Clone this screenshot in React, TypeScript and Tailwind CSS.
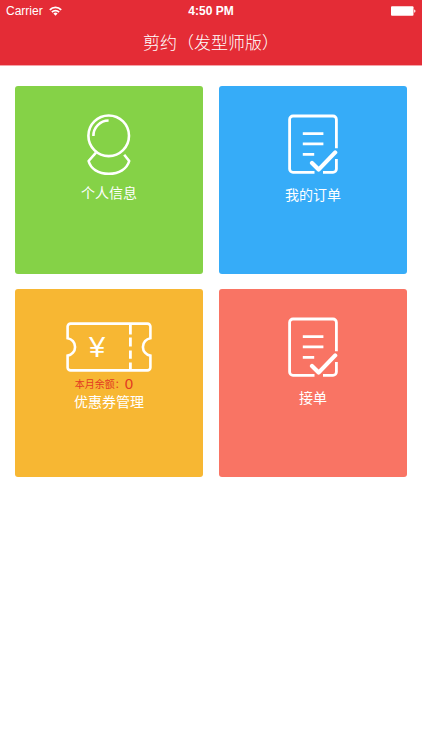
import type { ReactNode } from 'react';

function WifiIcon() {
  return (
    <svg width="13" height="10" viewBox="0 0 13 10" fill="none" stroke="white" strokeWidth="1.8" aria-hidden="true">
      <path d="M0.8 3.8a8 8 0 0 1 11.4 0" />
      <path d="M2.9 6.1a5 5 0 0 1 7.2 0" />
      <path d="M6.5 9.8L4.4 7.6a2.9 2.9 0 0 1 4.2 0z" fill="white" stroke="none" />
    </svg>
  );
}

function BatteryIcon() {
  return (
    <svg width="26" height="10" viewBox="0 0 26 10" fill="white" aria-hidden="true">
      <rect x="1" y="0.3" width="22.5" height="9.4" rx="1" />
      <path d="M24.2 3.4c1.6 0.2 1.6 3 0 3.2z" />
    </svg>
  );
}

function PersonIcon() {
  return (
    <svg width="44" height="62" viewBox="0 0 44 62" fill="none" stroke="white" strokeWidth="2.6" aria-hidden="true">
      <circle cx="21.7" cy="21.8" r="20.3" />
      <path d="M6.4 22A15.3 15.3 0 0 1 21.6 6.5" />
      <path d="M9 38.6L1.6 47C3.6 54.8 11.4 59.8 21.8 59.8S40 54.8 42.2 47L37.2 40.8" strokeLinejoin="round" />
    </svg>
  );
}

function OrderIcon() {
  return (
    <svg width="50" height="60" viewBox="0 0 50 60" fill="none" stroke="white" aria-hidden="true">
      <path d="M26.5 58.3H5a3.4 3.4 0 0 1-3.4-3.4V5.4A3.4 3.4 0 0 1 5 2h40a3.4 3.4 0 0 1 3.4 3.4v28.8" strokeWidth="2.8" />
      <path d="M48.4 45v9.9a3.4 3.4 0 0 1-3.4 3.4H35" strokeWidth="2.8" />
      <path d="M14.8 19.6h20.6M14.8 29.8h20.6M14.8 40.4h11.4" strokeWidth="2.8" />
      <path d="M24 49l6.6 6.6L47.2 38.4" strokeWidth="4.2" strokeLinecap="round" strokeLinejoin="round" />
    </svg>
  );
}

function CouponIcon() {
  return (
    <svg width="86" height="50" viewBox="0 0 86 50" fill="none" stroke="white" strokeWidth="2.6" aria-hidden="true">
      <path d="M4.6 1.6h76.8a3 3 0 0 1 3 3v11.6a8.8 8.8 0 0 0 0 17.4v11.8a3 3 0 0 1-3 3H4.6a3 3 0 0 1-3-3V33.6a8.8 8.8 0 0 0 0-17.4V4.6a3 3 0 0 1 3-3z" />
      <path d="M64.4 2v10.6M64.4 15.6v9M64.4 28.4v8.4M64.4 40.4v8" strokeWidth="2.8" />
      <text
        x="31"
        y="35"
        textAnchor="middle"
        fill="white"
        stroke="none"
        fontSize="29"
        fontFamily="'Liberation Sans', sans-serif"
      >
        ¥
      </text>
    </svg>
  );
}

type TileProps = {
  color: string;
  icon: ReactNode;
  label: string;
  note?: ReactNode;
};

function Tile({ color, icon, label, note }: TileProps) {
  return (
    <button type="button" className={`flex aspect-square flex-col items-center rounded-[3px] text-white ${color}`}>
      {icon}
      {note}
      <span className="text-sm leading-5">{label}</span>
    </button>
  );
}

export default function App() {
  return (
    <div className="min-h-screen bg-white font-['Liberation_Sans','Noto_Sans_CJK_SC',sans-serif]">
      <header className="border-b border-[#f5a3a8] bg-[#e42c36] text-white">
        <div className="grid h-5 grid-cols-3 items-center px-1.5 pt-px text-xs leading-5">
          <div className="flex items-center gap-1.5">
            <span>Carrier</span>
            <WifiIcon />
          </div>
          <span className="text-center font-bold">4:50 PM</span>
          <div className="flex justify-end">
            <BatteryIcon />
          </div>
        </div>
        <h1 className="pt-[3px] text-center text-[17px] leading-[42px] font-light">剪约（发型师版）</h1>
      </header>

      <main className="grid grid-cols-2 gap-x-4 gap-y-[15px] px-[15px] pt-5">
        <Tile
          color="bg-[#85d247] pt-7"
          icon={<div className="pb-[7px]"><PersonIcon /></div>}
          label="个人信息"
        />
        <Tile
          color="bg-[#36acf8] pt-7"
          icon={<div className="pb-[11px]"><OrderIcon /></div>}
          label="我的订单"
        />
        <Tile
          color="bg-[#f7b733] pt-[33px]"
          icon={<div className="pb-1"><CouponIcon /></div>}
          label="优惠券管理"
          note={
            <span className="flex h-4 items-center pr-2.5 text-[#e23a22]">
              <span className="text-[10px]">本月余额：</span>
              <span className="text-[15px]">0</span>
            </span>
          }
        />
        <Tile
          color="bg-[#f97464] pt-7"
          icon={<div className="pb-[11px]"><OrderIcon /></div>}
          label="接单"
        />
      </main>
    </div>
  );
}
